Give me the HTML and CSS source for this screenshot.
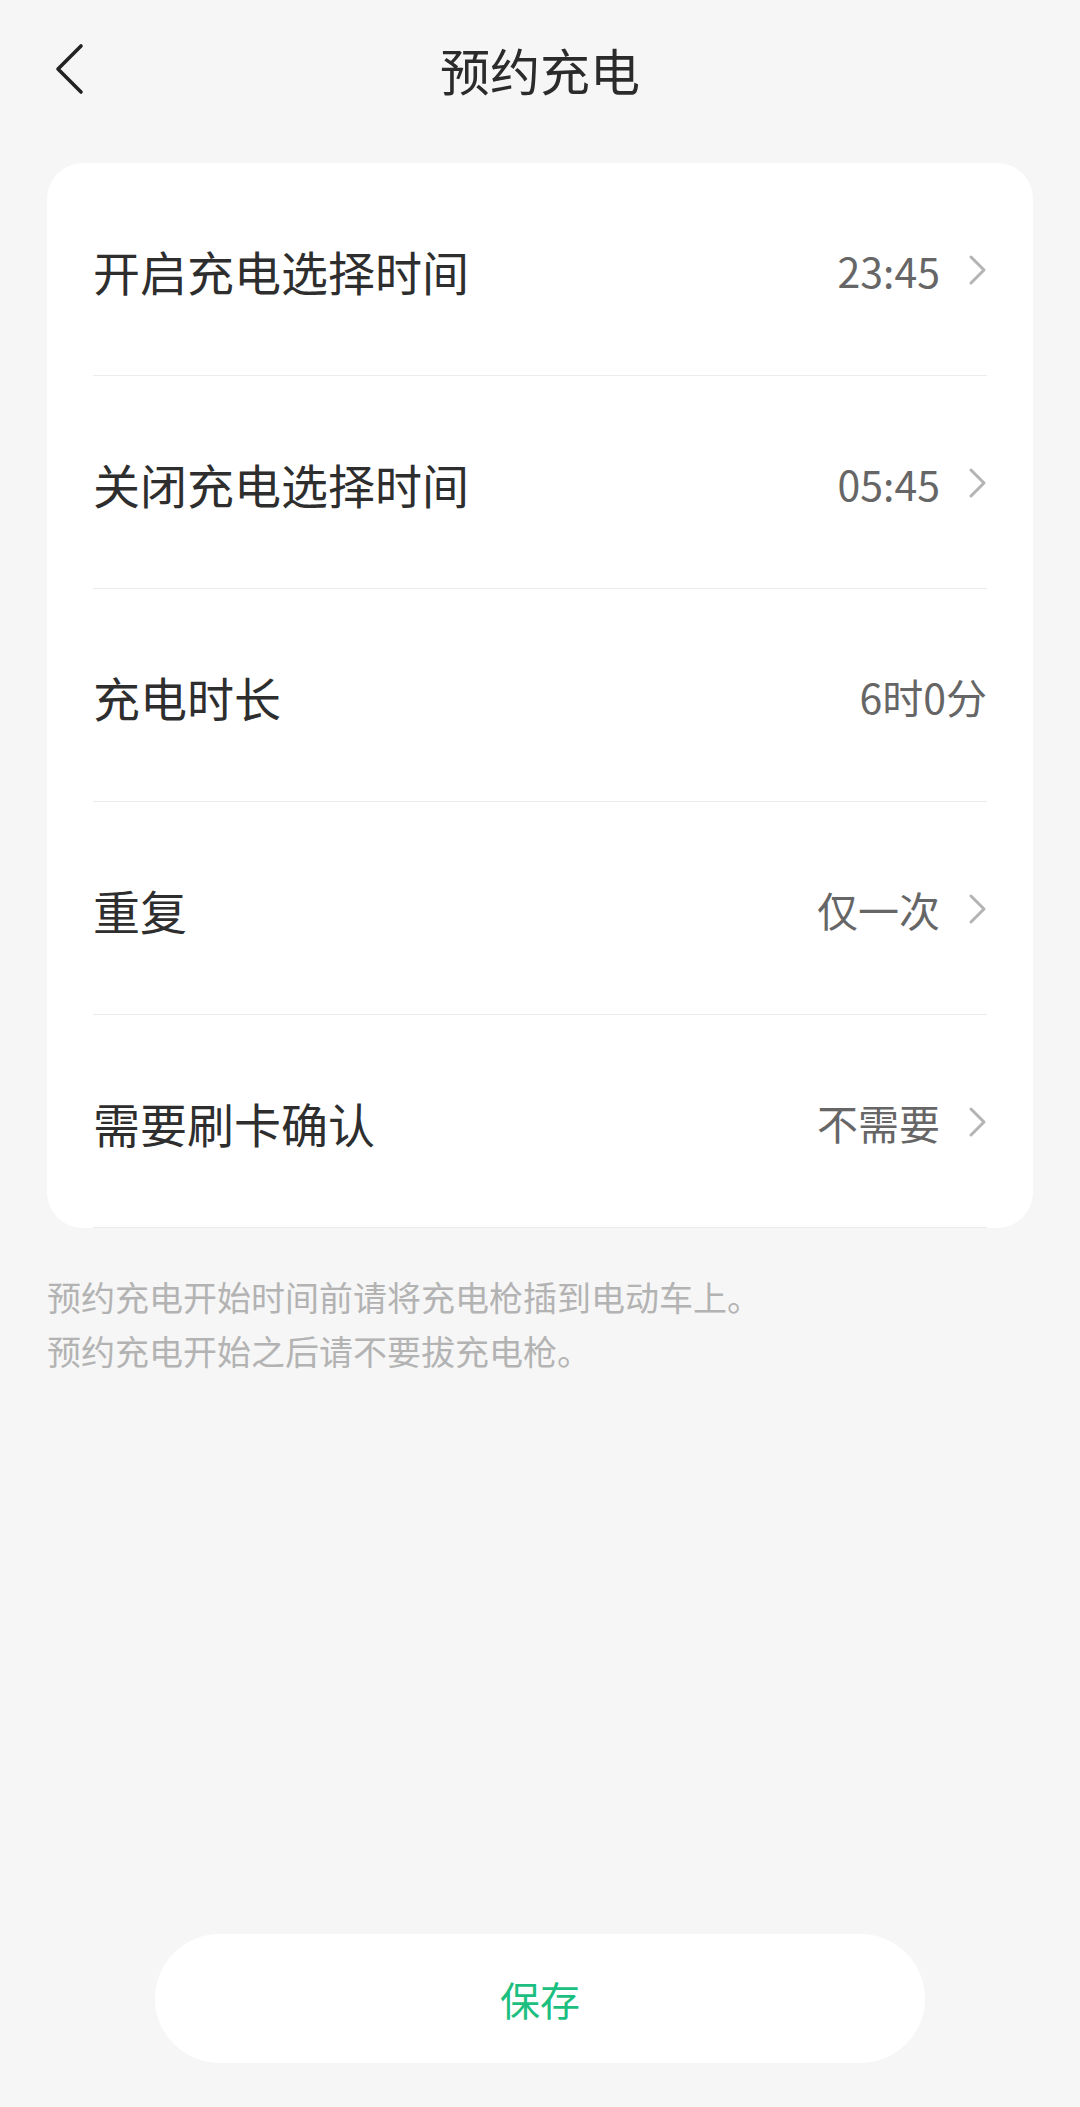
FILE: index.html
```html
<!DOCTYPE html>
<html lang="zh-CN">
<head>
<meta charset="utf-8">
<title>预约充电</title>
<link rel="stylesheet" href="styles.css">
</head>
<body>
<div class="page">
  <header class="topbar">
    <span class="back">
      <svg width="30" height="52" viewBox="0 0 30 52"><path d="M27 3 L4 26 L27 49" fill="none" stroke="#222" stroke-width="3.6" stroke-linecap="round" stroke-linejoin="round"/></svg>
    </span>
    <h1 class="title">预约充电</h1>
  </header>

  <section class="card">
    <div class="row">
      <span class="label">开启充电选择时间</span>
      <span class="value">23:45<svg class="chev" width="19" height="32" viewBox="0 0 19 32"><path d="M3 3 L16 16 L3 29" fill="none" stroke="#b4b4b4" stroke-width="3" stroke-linecap="round" stroke-linejoin="round"/></svg></span>
    </div>
    <div class="row">
      <span class="label">关闭充电选择时间</span>
      <span class="value">05:45<svg class="chev" width="19" height="32" viewBox="0 0 19 32"><path d="M3 3 L16 16 L3 29" fill="none" stroke="#b4b4b4" stroke-width="3" stroke-linecap="round" stroke-linejoin="round"/></svg></span>
    </div>
    <div class="row">
      <span class="label">充电时长</span>
      <span class="value">6时0分</span>
    </div>
    <div class="row">
      <span class="label">重复</span>
      <span class="value">仅一次<svg class="chev" width="19" height="32" viewBox="0 0 19 32"><path d="M3 3 L16 16 L3 29" fill="none" stroke="#b4b4b4" stroke-width="3" stroke-linecap="round" stroke-linejoin="round"/></svg></span>
    </div>
    <div class="row">
      <span class="label">需要刷卡确认</span>
      <span class="value">不需要<svg class="chev" width="19" height="32" viewBox="0 0 19 32"><path d="M3 3 L16 16 L3 29" fill="none" stroke="#b4b4b4" stroke-width="3" stroke-linecap="round" stroke-linejoin="round"/></svg></span>
    </div>
  </section>

  <p class="notes">预约充电开始时间前请将充电枪插到电动车上。<br>预约充电开始之后请不要拔充电枪。</p>

  <button class="save">保存</button>
</div>
</body>
</html>
```
FILE: styles.css
```css
html, body {
  margin: 0;
  padding: 0;
  background: #f6f6f6;
}
body {
  font-family: "Noto Sans CJK SC", "Noto Sans", sans-serif;
  color: #333;
}
.page {
  min-height: 2107px;
  display: flex;
  flex-direction: column;
  box-sizing: border-box;
}
.topbar {
  height: 138px;
  display: flex;
  align-items: center;
  justify-content: center;
  position: relative;
}
.back {
  position: absolute;
  left: 54px;
  top: 43px;
  display: block;
  line-height: 0;
}
.title {
  margin: 0;
  font-size: 50px;
  font-weight: 400;
  color: #2b2b2b;
  line-height: 1;
}
.card {
  margin: 25px 47px 0;
  background: #fff;
  border-radius: 36px;
  padding: 0 46px;
  overflow: hidden;
}
.row {
  height: 213px;
  border-bottom: 1px solid #ececec;
  display: flex;
  align-items: center;
  justify-content: space-between;
  padding-top: 2px;
  box-sizing: border-box;
}
.label {
  font-size: 47px;
  color: #2e2e2e;
}
.value {
  font-size: 41px;
  color: #666;
  display: flex;
  align-items: center;
}
.chev {
  margin-left: 28px;
  display: block;
}
.notes {
  margin: 42px 47px 0;
  font-size: 34px;
  line-height: 54px;
  color: #b3b3b3;
}
.save {
  margin: auto auto 44px;
  width: 770px;
  height: 129px;
  border: none;
  border-radius: 65px;
  background: #fff;
  color: #1dbf80;
  font-family: "Noto Sans CJK SC", "Noto Sans", sans-serif;
  font-size: 40px;
  padding: 0;
}
```
